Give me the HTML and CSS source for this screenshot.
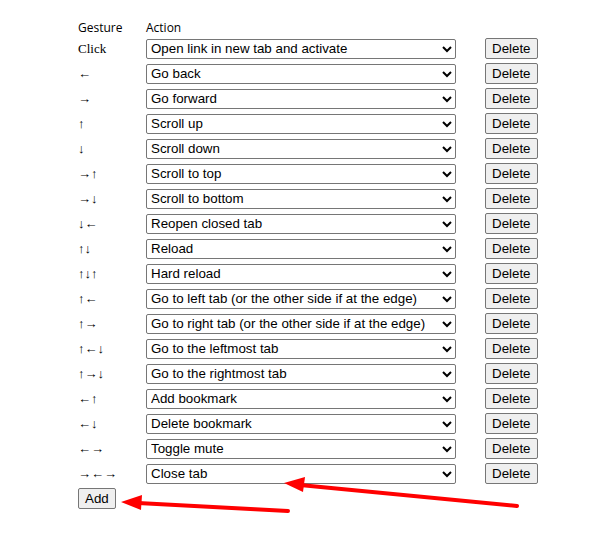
FILE: index.html
```html
<!DOCTYPE html>
<html lang="en">
<head>
  <meta charset="UTF-8">
  <title>Gestures</title>
  <link rel="stylesheet" href="styles.css">
</head>
<body>

  <p class="intro">Hold the right mouse button and drag to perform a gesture, configure gestures below.</p>

  <div class="gestures">
    <div class="head">Gesture</div>
    <div class="head">Action</div>
    <div class="head"></div>

    <div class="gesture">Click</div>
    <select><option>Open link in new tab and activate</option></select>
    <button>Delete</button>

    <div class="gesture">←</div>
    <select><option>Go back</option></select>
    <button>Delete</button>

    <div class="gesture">→</div>
    <select><option>Go forward</option></select>
    <button>Delete</button>

    <div class="gesture">↑</div>
    <select><option>Scroll up</option></select>
    <button>Delete</button>

    <div class="gesture">↓</div>
    <select><option>Scroll down</option></select>
    <button>Delete</button>

    <div class="gesture">→↑</div>
    <select><option>Scroll to top</option></select>
    <button>Delete</button>

    <div class="gesture">→↓</div>
    <select><option>Scroll to bottom</option></select>
    <button>Delete</button>

    <div class="gesture">↓←</div>
    <select><option>Reopen closed tab</option></select>
    <button>Delete</button>

    <div class="gesture">↑↓</div>
    <select><option>Reload</option></select>
    <button>Delete</button>

    <div class="gesture">↑↓↑</div>
    <select><option>Hard reload</option></select>
    <button>Delete</button>

    <div class="gesture">↑←</div>
    <select><option>Go to left tab (or the other side if at the edge)</option></select>
    <button>Delete</button>

    <div class="gesture">↑→</div>
    <select><option>Go to right tab (or the other side if at the edge)</option></select>
    <button>Delete</button>

    <div class="gesture">↑←↓</div>
    <select><option>Go to the leftmost tab</option></select>
    <button>Delete</button>

    <div class="gesture">↑→↓</div>
    <select><option>Go to the rightmost tab</option></select>
    <button>Delete</button>

    <div class="gesture">←↑</div>
    <select><option>Add bookmark</option></select>
    <button>Delete</button>

    <div class="gesture">←↓</div>
    <select><option>Delete bookmark</option></select>
    <button>Delete</button>

    <div class="gesture">←→</div>
    <select><option>Toggle mute</option></select>
    <button>Delete</button>

    <div class="gesture">→←→</div>
    <select><option>Close tab</option></select>
    <button>Delete</button>
  </div>

  <button class="add">Add</button>

  <!-- annotation arrows -->
  <svg class="marks" width="615" height="534" viewBox="0 0 615 534">
    <g stroke="#f00" stroke-width="4" stroke-linecap="round">
      <line x1="517" y1="506" x2="300" y2="485" />
      <line x1="288" y1="511" x2="138" y2="503" />
    </g>
    <g fill="#f00">
      <polygon points="284,483 305,477 303,492" />
      <polygon points="121,502 142,495 141,510" />
    </g>
  </svg>

</body>
</html>
```

FILE: styles.css
```css
body {
  margin: 0;
  padding: 0 0 0 78px;
  display: flow-root;
  font-family: "Liberation Sans", Arial, sans-serif;
  font-size: 13px;
  color: #000;
  background: #fff;
}

.intro {
  margin: -17px 0 0 36px;
  height: 16px;
  font-size: 13px;
  line-height: 16px;
}

.gestures {
  display: grid;
  grid-template-columns: 68px 339px auto;
  grid-auto-rows: 21px;
  row-gap: 4px;
  align-items: center;
  margin-top: 14px;
}

.head {
  font-family: "Open Sans", "DejaVu Sans", sans-serif;
  font-size: 12px;
  line-height: 17px;
  align-self: end;
  margin-bottom: -2px;
}

.gesture {
  font-family: "Liberation Serif", "Times New Roman", serif;
  font-size: 13px;
}

select {
  width: 310px;
  height: 20px;
  font-family: "Liberation Sans", Arial, sans-serif;
  font-size: 13.33px;
  color: #000;
  border: 1px solid #767676;
  border-radius: 2px;
  background: #fff;
}

button {
  font-family: "Liberation Sans", Arial, sans-serif;
  font-size: 13.33px;
  height: 21px;
  padding: 1px 6px;
  color: #000;
  background: #efefef;
  border: 1px solid #767676;
  border-radius: 2px;
  justify-self: start;
}

.add {
  margin-top: 4px;
}

.marks {
  position: fixed;
  left: 0;
  top: 0;
  pointer-events: none;
}
```
